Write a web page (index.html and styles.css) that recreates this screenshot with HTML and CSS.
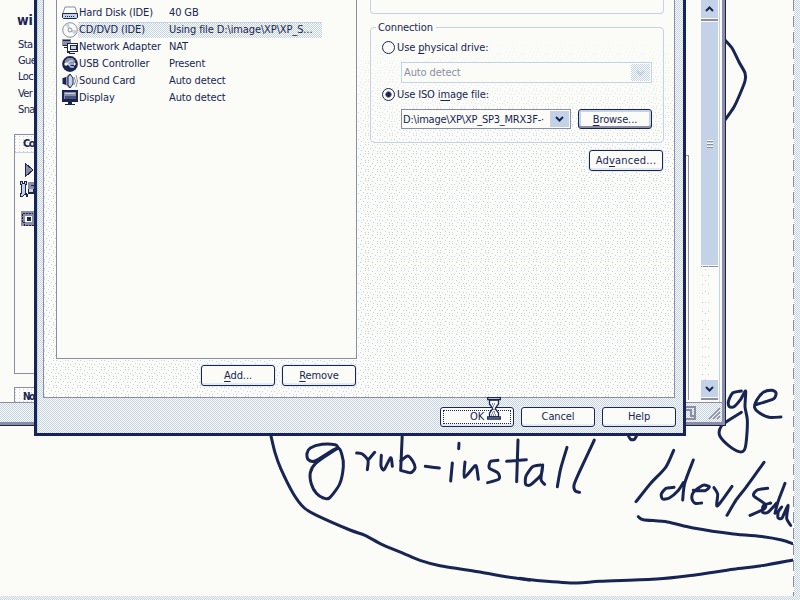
FILE: index.html
```html
<!DOCTYPE html>
<html lang="en">
<head>
<meta charset="utf-8">
<title>Virtual Machine Settings</title>
<link rel="stylesheet" href="styles.css">
</head>
<body>
<main class="desktop">
  <svg class="ink" width="794" height="596" viewBox="0 0 794 596">
    <g transform="translate(250 420) scale(.33333)">
      <path d="M62 44L75 98 92 145 130 221 163 264 200 286 300 330 345 346 395 373 460 400 510 421 570 437 690 456 760 469 840 480"/>
      <path d="M264 82L256 74 216 73 181 84 171 100 174 118 195 123 262 84 276 106 280 140 269 192 238 234 220 234 199 220 184 192 181 158 197 130 264 84"/>
      <path d="M320 99L337 102 354 121 352 149M354 121L374 97M394 106L393 138 402 149 422 113 427 139M457 40L452 151M452 123L473 108 488 123 495 144 482 158 452 151M526 139L568 144M627 70L626 86M607 129L602 183M645 126L643 172 674 138 680 143 685 178M744 121L722 124 718 144 744 159 747 177 713 188M804 60L800 185M770 124L829 119"/>
    </g>
    <g transform="translate(520 360) scale(.33333)">
      <path d="M0 655L60 662 170 669 240 664 410 657 500 648 640 628 720 618 819 600"/>
      <path d="M355 470L370 479 442 486 520 504 640 522 730 530 785 540 819 551"/>
      <path d="M61 315L38 320 18 348 17 373 32 374 63 344 68 315 63 359 74 373M141 262L122 326 112 380M223 240L178 336 162 375 166 393 179 397M326 229L332 238 343 238 349 229"/>
      <path d="M461 271L437 322 391 371 348 425M462 382L438 385 424 402 428 417 448 414 474 392 490 368M520 300L494 370 488 420M520 391L555 392 568 380 548 376 520 397 516 417 526 430 545 429M582 383L593 402 592 438 636 379M732 307L678 382 649 419 621 466M743 385L712 390 701 407 735 432 732 447 690 466M752 429L730 437 728 457 744 457 770 429M795 370L774 425 765 460M785 441L775 455 774 473 786 474 804 436 800 475 812 496"/>
      <path d="M664 93L638 99 625 125 628 140 642 140 662 118 677 93 675 140 682 180 679 242 673 270 657 275 626 257 600 229 599 208 612 190 664 157M704 135L760 117 768 98 755 91 730 97 710 121 704 143 720 160 747 172 783 171"/>
    </g>
    <path d="M725 40L732 48 739 62 745 73 745 81 740 94 734 107 725 120"/>
  </svg>
  <div class="edge-right"></div>
  <div class="edge-bottom"></div>

  <section class="window">
    <div class="client">
      <div class="summary">
        <h1>wi</h1>
        <p>Sta</p><p>Gue</p><p>Loc</p><p>Ver</p><p>Sna</p>
        <div class="card commands">
          <h2>Co</h2>
          <svg width="19" height="70" viewBox="0 0 19 70" shape-rendering="crispEdges">
            <path d="M11 10L19 17 11 24Z" fill="#8c8ca4" stroke="#182554"/>
            <path d="M6 28v3h1v9H6v3h3l2-2h2v2h-1v-3h-1v-9h1v-3h-2v2H8v-2Z" fill="#c4d2e8" stroke="#182554"/>
            <path d="M14 29h6v12h-6Z" fill="#8c8ca4"/><path d="M14 36h6v5h-6ZM17 32h3v1h-3Z" fill="#182554"/><path d="M15 36h4v3h-4Z" fill="#c4d2e8"/>
            <path d="M7 58h13v15H7Z" fill="#8c8ca4"/><path d="M8 61v8h2v3h10M9 60h10" fill="none" stroke="#182554" stroke-dasharray="2 1"/><path d="M11 63h7v6h-7Z" fill="#fbfcf8"/><path d="M13 64h4v4h-4Z" fill="#182554"/>
          </svg>
        </div>
        <div class="card notes"><h2>No</h2></div>
      </div>
      <div class="panel-edge"></div>
      <div class="scroll">
        <div class="arrow"><svg width="9" height="6" viewBox="0 0 9 6"><path d="M1 5L4.500 1.500 8 5"/></svg></div>
        <div class="thumb"><i></i></div>
        <div class="track"></div>
        <div class="arrow down"><svg width="9" height="6" viewBox="0 0 9 6"><path d="M1 1L4.500 4.500 8 1"/></svg></div>
      </div>
    </div>
    <div class="status">
      <svg width="36" height="18" viewBox="0 0 36 18"><path d="M0 4h9v12H0M0 7h5v6h4" fill="none" stroke="#8c8ca4" stroke-width="2"/><path d="M23 16L34 5M27 16L34 9M31 16L34 13" stroke="#8c8ca4" stroke-width="1.500"/></svg>
    </div>
  </section>

  <section class="dialog">
    <div class="pane">
      <div class="left">
        <div class="devices">
          <div class="row">
            <svg width="16" height="16" viewBox="0 0 16 16"><path d="M3 2h10l2 6v4H1V8Z" fill="#fbfcf8" stroke="#8c8ca4"/><path d="M.5 8.500h15v4l-1 1h-13l-1-1Z" fill="#c4d2e8" stroke="#182554"/><path d="M3 11.500h10" stroke="#182554" stroke-dasharray="1 1"/></svg>
            <span>Hard Disk (IDE)</span><b>40 GB</b></div>
          <div class="row selected">
            <svg width="16" height="16" viewBox="0 0 16 16"><circle cx="8" cy="8" r="7.300" fill="#fbfcf8" stroke="#8c8ca4"/><path d="M8 8L3 3 7 1ZM8 8l5 5 2-5Z" fill="#c4d2e8"/><circle cx="8" cy="8" r="2" fill="#fbfcf8" stroke="#8c8ca4"/></svg>
            <span>CD/DVD (IDE)</span><b>Using file D:\image\XP\XP_S...</b></div>
          <div class="row">
            <svg width="16" height="16" viewBox="0 0 16 16" shape-rendering="crispEdges"><path d="M0 0h9v7H0Z" fill="#8c8ca4"/><path d="M1 1h7M1 6h4M2 8h3v5h3M7 14h6" fill="none" stroke="#182554"/><path d="M5 4h10v8H5Z" fill="#fbfcf8" stroke="#182554"/><path d="M8 6h6v4H8Z" fill="#c4d2e8" stroke="#182554"/></svg>
            <span>Network Adapter</span><b>NAT</b></div>
          <div class="row">
            <svg width="16" height="16" viewBox="0 0 16 16"><circle cx="8" cy="8" r="7.900" fill="#182554"/><path d="M2.500 5l3-3h5l3 3-2 2H4Z" fill="#8c8ca4"/><path d="M3 8h10M5 8l3-3h3M6 8l3 3h3" fill="none" stroke="#c4d2e8" stroke-width="1.400"/><circle cx="4" cy="8" r="1.700" fill="#fbfcf8"/><path d="M12 6l2 2-2 2Z" fill="#fbfcf8"/></svg>
            <span>USB Controller</span><b>Present</b></div>
          <div class="row">
            <svg width="16" height="16" viewBox="0 0 16 16"><path d="M0 5h3l4-4h2v14H7l-4-4H0Z" fill="#8c8ca4"/><path d="M8 1l3 4v6l-3 4-2-3V4Z" fill="#c4d2e8" stroke="#182554"/><path d="M1 5v6l3 1V4Z" fill="#182554"/><path d="M12 4q3 4 0 8M14 2q3 6 0 12" fill="none" stroke="#8c8ca4"/></svg>
            <span>Sound Card</span><b>Auto detect</b></div>
          <div class="row">
            <svg width="16" height="16" viewBox="0 0 16 16" shape-rendering="crispEdges"><path d="M0 0h16v12H0ZM6 12h4v2h3v1H3v-1h3Z" fill="#182554"/><path d="M2 2h12v7H2Z" fill="#8c8ca4"/><path d="M3 3h10v1H3Z" fill="#c4d2e8"/><path d="M3 6h11v3H3Z" fill="#182554" opacity=".55"/></svg>
            <span>Display</span><b>Auto detect</b></div>
        </div>
        <div class="buttons"><button><u>A</u>dd...</button><button><u>R</u>emove</button></div>
      </div>
      <div class="right">
        <div class="group top"></div>
        <div class="group connection">
          <div class="legend"><span>Connection</span></div>
          <label class="radio"><i></i><span>Use <u>p</u>hysical drive:</span></label>
          <div class="combo disabled"><span>Auto detect</span><em><svg width="9" height="6" viewBox="0 0 9 6"><path d="M1 1L4.500 4.500 8 1"/></svg></em></div>
          <label class="radio checked"><i></i><span>Use ISO i<u>m</u>age file:</span></label>
          <div class="line"><div class="combo"><span>D:\image\XP\XP_SP3_MRX3F-·</span><em><svg width="9" height="6" viewBox="0 0 9 6"><path d="M1 1L4.500 4.500 8 1"/></svg></em></div><button class="focus"><u>B</u>rowse...</button></div>
        </div>
        <button class="advanced">Ad<u>v</u>anced...</button>
      </div>
    </div>
    <div class="footer"><button class="ok">OK</button><button>Cancel</button><button>Help</button></div>
  </section>
  <svg class="hourglass" width="14" height="23" viewBox="0 0 14 23"><path d="M2.500 3v4l3 4v1l-3 4v4h9v-4l-3-4v-1l3-4V3Z" fill="#fbfcf8" stroke="#182554" stroke-width="1.300"/><path d="M.7.700h12.600v2H.7ZM.7 20h12.600v2H.7Z" fill="#fbfcf8" stroke="#182554" stroke-width="1.300"/><path d="M5 7h4M6 9h2M7 12v4M5 16h4M4 18h6" stroke="#182554" stroke-dasharray="1 1"/></svg>
</main>
<script src="ink.js"></script>
</body>
</html>
```
FILE: styles.css
```css
:root {
  --paper: #fbfcf8;
  --navy: #182554;
  --blue: #c4d2e8;
  --gray: #8c8ca4;
  --checker: repeating-conic-gradient(var(--blue) 0 25%, var(--paper) 0 50%) 0 0 / 2px 2px;
  --dot: conic-gradient(at 1px 1px, transparent 75%, var(--blue) 0);
}
* { box-sizing: border-box; }
body { margin: 0; }
.desktop {
  position: relative; width: 800px; height: 600px; overflow: hidden;
  background: var(--paper); color: var(--navy);
  font: 11px/17px "DejaVu Sans Condensed", "DejaVu Sans", sans-serif;
  letter-spacing: -.12px; white-space: nowrap;
}
.ink { position: absolute; left: 0; top: 0; }
.ink path { fill: none; stroke: var(--navy); stroke-width: 3; stroke-linecap: round; stroke-linejoin: round; }
.ink g path { stroke-width: 9; }
.edge-right {
  position: absolute; right: 0; top: 0; width: 7px; height: 600px;
  background:
    repeating-linear-gradient(var(--gray) 0 11px, var(--paper) 11px 16px) 0 0 / 1px 100% no-repeat,
    var(--checker);
}
.edge-bottom { position: absolute; left: 0; bottom: 0; width: 800px; height: 4px; background: var(--checker); }

/* Main window, partly covered by the dialog */
.window {
  position: absolute; left: 0; top: 0; width: 726px; height: 426px; background: var(--paper);
  border-right: 1px solid var(--navy); border-bottom: 1px solid var(--navy);
  box-shadow: inset -3px -3px var(--gray);
}
.client { display: flex; height: 403px; width: 722px; border-bottom: 1px solid var(--gray); }
.summary { width: 34px; height: 402px; padding: 9px 0 0 14px; }
.summary h1 { margin: 0 0 6px 3px; font: bold 14px/22px "DejaVu Sans Condensed", sans-serif; height: 22px; }
.summary p { margin: 0 0 0 4px; line-height: 16.200px; letter-spacing: -.6px; }
.card { width: 20px; border: 1px solid var(--gray); border-right: 0; }
.commands { height: 240px; margin-top: 16px; }
.notes { height: 15px; margin-top: 13px; border-bottom: 0; }
.card h2 {
  margin: 0; height: 18px; padding-left: 8px; font-size: 11px; line-height: 18px; letter-spacing: -1.500px;
  background: var(--dot) 0 1px / 4px 3px; border-bottom: 1px solid var(--blue);
}
.notes h2 { height: 14px; border: 0; font-size: 10px; }
.card svg { display: block; margin-left: -1px; overflow: visible; }
.panel-edge { width: 3px; height: 245px; margin: 155px 0 0 652px; border: solid var(--gray); border-width: 1px 1px 0 0; }
.scroll {
  display: flex; flex-direction: column; width: 19px; height: 402px; margin-left: 12px;
  border-right: 1px solid var(--blue); padding: 0 1px 4px 0;
}
.arrow { display: flex; align-items: center; justify-content: center; height: 19px; background: var(--blue); border-bottom: 1px solid var(--paper); box-shadow: 0 2px var(--gray); }
.arrow.down { height: 18px; }
.arrow path, .combo path { fill: none; stroke: var(--navy); stroke-width: 2; }
.thumb { display: flex; justify-content: center; align-items: center; height: 244px; margin-top: 3px; background: var(--blue); border-bottom: 1px solid var(--paper); box-shadow: 0 1px var(--gray); }
.thumb i { width: 6px; height: 8px; background: repeating-linear-gradient(var(--paper) 0 1px, var(--gray) 1px 2px, var(--blue) 2px 3px); }
.track { flex: 1; background: var(--dot) 1px 0 / 6px 9px, var(--dot) 4px 3px / 7px 11px; width: 8px; }
.status { display: flex; justify-content: flex-end; width: 722px; height: 19px; background: var(--checker); }

/* Settings dialog */
.dialog {
  position: absolute; left: 34px; top: 0; width: 652px; height: 436px;
  border: solid var(--navy); border-width: 0 3px 3px; background: var(--checker);
  box-shadow: inset 1px 0 var(--blue);
}
.pane {
  position: relative; display: flex; height: 398px; margin: 0 8px 0 6px; padding-left: 12px;
  border: solid var(--gray); border-width: 0 1px 1px; background: var(--paper);
}
.pane::before {
  content: ""; position: absolute; inset: 0;
  background: var(--dot) 0 0 / 12px 9px, var(--dot) 4px 1px / 12px 9px, var(--dot) 9px 0 / 12px 9px,
    var(--dot) 2px 4px / 12px 9px, var(--dot) 7px 3px / 12px 9px, var(--dot) 11px 4px / 12px 9px,
    var(--dot) 0 7px / 12px 9px, var(--dot) 5px 6px / 12px 9px, var(--dot) 9px 7px / 12px 9px;
  mask-image: linear-gradient(transparent 35px, #000 150px);
}
.left, .right { position: relative; }
.left { width: 301px; }
.devices { height: 359px; padding: 4px 0 0 5px; background: var(--paper); border: solid var(--gray); border-width: 0 1px 1px; }
.row { display: flex; align-items: center; height: 17px; width: 260px; }
.row svg { flex: none; }
.row span { width: 91px; padding-left: 1px; }
.row b { font-weight: normal; width: 153px; }
.selected span, .selected b { height: 16px; background: var(--checker); border-top: 1px solid var(--blue); line-height: 14px; }
.buttons { display: flex; justify-content: flex-end; gap: 7px; margin-top: 6px; padding-right: 1px; }
button {
  display: block; width: 74px; height: 21px; padding: 0; border: 1px solid var(--navy); border-radius: 3px;
  background: var(--paper); color: inherit; font: inherit; letter-spacing: inherit; line-height: 19px;
  box-shadow: inset 0 -2px #e5ebf3, 0 0 0 1px #e5ebf3;
}
u { text-decoration: underline; text-underline-offset: 2px; text-decoration-thickness: 1px; }
.right { width: 294px; margin-left: 13px; }
.group { border: 1px solid var(--blue); border-radius: 4px; }
.group.top { height: 14px; border-top: 0; border-radius: 0 0 4px 4px; background: var(--paper); }
.connection { height: 116px; margin-top: 13px; }
.legend { height: 12px; margin: -9px 0 0 5px; }
.legend span { display: inline-block; background: var(--paper); padding: 0 3px 0 2px; }
.radio { display: flex; align-items: center; gap: 2px; height: 17px; margin: 8px 0 0 11px; }
.radio i { width: 13px; height: 13px; border: 1px solid var(--navy); border-radius: 50%; background: var(--paper); }
.checked i { background: radial-gradient(var(--navy) 0 2px, var(--gray) 3px, var(--paper) 3.500px); }
.combo {
  display: flex; width: 170px; height: 20px; margin-left: 30px; padding: 1px; border: 1px solid var(--gray); background: var(--paper);
}
.combo span { flex: 1; line-height: 17px; width: 0; margin-right: 2px; letter-spacing: -.22px; }
.combo em { display: flex; align-items: center; justify-content: center; width: 19px; background: var(--blue); }
.disabled { width: 251px; height: 21px; margin-top: 6px; border-color: var(--blue); color: var(--gray); }
.disabled span { padding-left: 1px; line-height: 18px; letter-spacing: inherit; }
.disabled em { background: var(--checker); }
.disabled path { stroke: var(--blue); }
.radio.checked { margin-top: 3px; }
.line { display: flex; gap: 7px; margin-top: 6px; }
.focus { box-shadow: inset 0 -2px var(--gray), inset 0 0 0 2px var(--blue); height: 20px; }
.advanced { margin: 7px 1px 0 auto; letter-spacing: .2px; }
.footer { display: flex; justify-content: flex-end; gap: 7px; padding: 9px 7px 0 0; }
.footer button { height: 20px; line-height: 18px; }
.footer .ok { outline: 1px dotted var(--navy); outline-offset: -4px; }
.hourglass { position: absolute; left: 487px; top: 397px; }
```
FILE: ink.js
```js
// Turns the pen samples of each stroke into a smooth curve through them.
document.querySelectorAll('.ink path').forEach(function (path) {
  var strokes = path.getAttribute('d').split('M').filter(Boolean);
  path.setAttribute('d', strokes.map(function (stroke) {
    var n = stroke.match(/[\d.]+/g).map(Number), p = [];
    for (var i = 0; i < n.length; i += 2) p.push([n[i], n[i + 1]]);
    var d = 'M' + p[0];
    for (i = 0; i < p.length - 1; i++) {
      var a = p[i - 1] || p[i], b = p[i], c = p[i + 1], e = p[i + 2] || c;
      d += 'C' + [b[0] + (c[0] - a[0]) / 8, b[1] + (c[1] - a[1]) / 8,
        c[0] - (e[0] - b[0]) / 8, c[1] - (e[1] - b[1]) / 8, c[0], c[1]];
    }
    return d;
  }).join(''));
});
```
